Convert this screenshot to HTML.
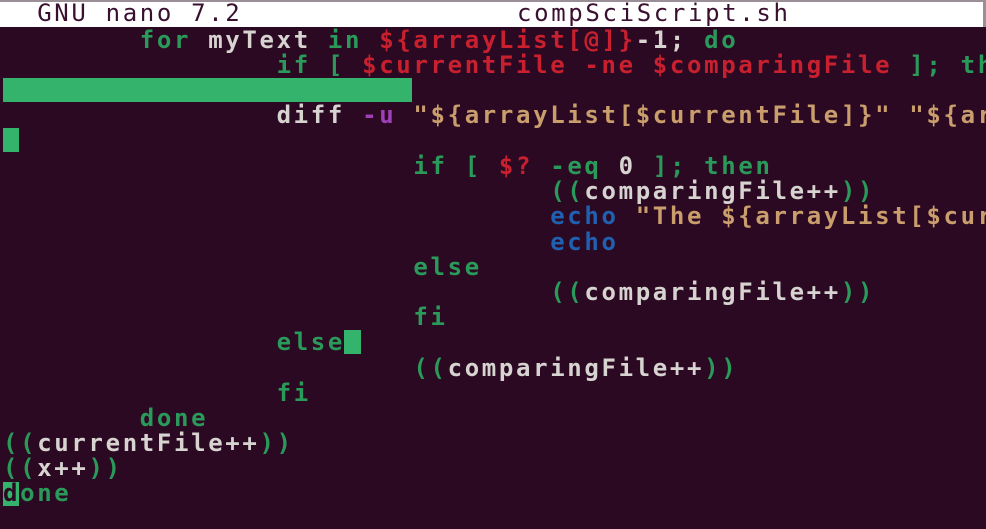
<!DOCTYPE html>
<html><head><meta charset="utf-8"><style>
html,body{margin:0;padding:0;width:986px;height:529px;overflow:hidden;background:#2c0922;}
#title{position:absolute;left:0;top:0;width:986px;height:27px;background:#fff;border-top:2px solid #9a8f96;box-sizing:border-box;border-right:3px solid #9a8f96;}
.l{position:absolute;left:3px;font-family:"DejaVu Sans Mono","Liberation Mono",monospace;font-size:24px;letter-spacing:2.65px;white-space:pre;color:#d6d3d0;line-height:25px;font-weight:bold;}
.t{color:#3a1030;font-weight:normal;}
.g{color:#2a9a5a}.r{color:#c8202e}.o{color:#c99e6c}.p{color:#a040b8}.b{color:#2060b0}
.blk{position:absolute;background:#33b36b;}
</style></head><body>
<div id="title"></div>
<div class="l t" style="top:1px">  GNU nano 7.2</div>
<div class="l t" style="top:1px;left:517px">compSciScript.sh</div>
<div class="l" style="top:28px">        <span class="g">for</span> myText <span class="g">in</span> <span class="r">${arrayList[@]}</span>-1; <span class="g">do</span></div>
<div class="l" style="top:53px">                <span class="g">if [</span> <span class="r">$currentFile -ne $comparingFile</span> <span class="g">]; th</span></div>
<div class="blk" style="left:3px;top:78px;width:409px;height:24px"></div>
<div class="l" style="top:103px">                diff <span class="p">-u</span> <span class="o">"${arrayList[$currentFile]}" "${ar</span></div>
<div class="blk" style="left:3px;top:128px;width:16px;height:24px"></div>
<div class="l" style="top:154px">                        <span class="g">if [</span> <span class="r">$?</span> <span class="g">-eq</span> 0 <span class="g">]; then</span></div>
<div class="l" style="top:179px">                                <span class="g">((</span>comparingFile++<span class="g">))</span></div>
<div class="l" style="top:204px">                                <span class="b">echo</span> <span class="o">"The ${arrayList[$cur</span></div>
<div class="l" style="top:230px">                                <span class="b">echo</span></div>
<div class="l" style="top:255px">                        <span class="g">else</span></div>
<div class="l" style="top:280px">                                <span class="g">((</span>comparingFile++<span class="g">))</span></div>
<div class="l" style="top:305px">                        <span class="g">fi</span></div>
<div class="blk" style="left:344px;top:330px;width:17px;height:24px"></div>
<div class="l" style="top:330px">                <span class="g">else</span></div>
<div class="l" style="top:356px">                        <span class="g">((</span>comparingFile++<span class="g">))</span></div>
<div class="l" style="top:381px">                <span class="g">fi</span></div>
<div class="l" style="top:406px">        <span class="g">done</span></div>
<div class="l" style="top:431px"><span class="g">((</span>currentFile++<span class="g">))</span></div>
<div class="l" style="top:456px"><span class="g">((</span>x++<span class="g">))</span></div>
<div class="blk" style="left:3px;top:482px;width:16px;height:24px"></div>
<div class="l" style="top:481px"><span style="color:#2c0922">d</span><span class="g">one</span></div>
</body></html>
